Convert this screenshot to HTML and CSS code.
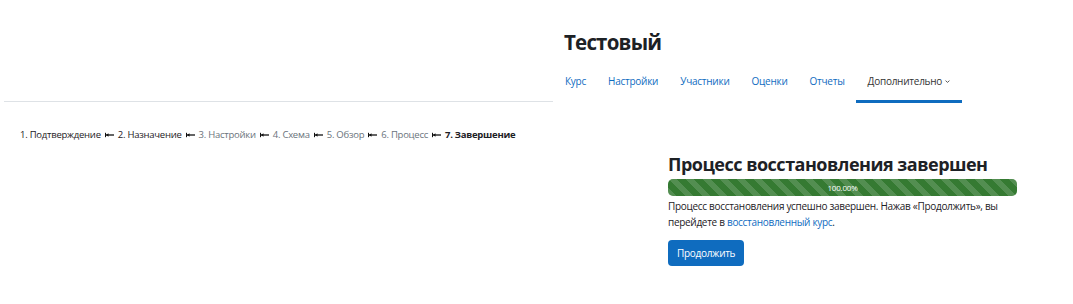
FILE: index.html
```html
<!DOCTYPE html>
<html lang="ru">
<head>
<meta charset="utf-8">
<title>Тестовый</title>
<link rel="stylesheet" href="styles.css">
</head>
<body>
<div class="top">
  <div class="left-head"></div>
  <div class="course-head">
    <h1 class="title">Тестовый</h1>
    <nav class="tabs">
      <a class="tab" href="#">Курс</a>
      <a class="tab" href="#">Настройки</a>
      <a class="tab" href="#">Участники</a>
      <a class="tab" href="#">Оценки</a>
      <a class="tab" href="#">Отчеты</a>
      <a class="tab active" href="#">Дополнительно<svg class="chev" viewBox="0 0 8 8" width="7" height="7"><path d="M1.8 3 L4 5 L6.2 3" fill="none" stroke="#444" stroke-width="1"/></svg></a>
    </nav>
  </div>
</div>

<div class="steps">
  <span class="step done">1. Подтверждение</span>
  <svg class="sep" viewBox="0 0 9 6" width="9" height="6"><path d="M0.5 0.8 V5.2" stroke="#111" stroke-width="1"/><path d="M1 3 H9" stroke="#111" stroke-width="1.3"/><path d="M1 3 L3.5 1.3 V4.7 Z" fill="#111"/></svg>
  <span class="step done">2. Назначение</span>
  <svg class="sep" viewBox="0 0 9 6" width="9" height="6"><path d="M0.5 0.8 V5.2" stroke="#111" stroke-width="1"/><path d="M1 3 H9" stroke="#111" stroke-width="1.3"/><path d="M1 3 L3.5 1.3 V4.7 Z" fill="#111"/></svg>
  <span class="step todo">3. Настройки</span>
  <svg class="sep" viewBox="0 0 9 6" width="9" height="6"><path d="M0.5 0.8 V5.2" stroke="#111" stroke-width="1"/><path d="M1 3 H9" stroke="#111" stroke-width="1.3"/><path d="M1 3 L3.5 1.3 V4.7 Z" fill="#111"/></svg>
  <span class="step todo">4. Схема</span>
  <svg class="sep" viewBox="0 0 9 6" width="9" height="6"><path d="M0.5 0.8 V5.2" stroke="#111" stroke-width="1"/><path d="M1 3 H9" stroke="#111" stroke-width="1.3"/><path d="M1 3 L3.5 1.3 V4.7 Z" fill="#111"/></svg>
  <span class="step todo">5. Обзор</span>
  <svg class="sep" viewBox="0 0 9 6" width="9" height="6"><path d="M0.5 0.8 V5.2" stroke="#111" stroke-width="1"/><path d="M1 3 H9" stroke="#111" stroke-width="1.3"/><path d="M1 3 L3.5 1.3 V4.7 Z" fill="#111"/></svg>
  <span class="step todo">6. Процесс</span>
  <svg class="sep" viewBox="0 0 9 6" width="9" height="6"><path d="M0.5 0.8 V5.2" stroke="#111" stroke-width="1"/><path d="M1 3 H9" stroke="#111" stroke-width="1.3"/><path d="M1 3 L3.5 1.3 V4.7 Z" fill="#111"/></svg>
  <span class="step current">7. Завершение</span>
</div>

<div class="result">
  <h2 class="result-title">Процесс восстановления завершен</h2>
  <div class="progress"><div class="bar" style="width:100%">100.00%</div></div>
  <p class="msg">Процесс восстановления успешно завершен. Нажав «Продолжить», вы перейдете в <a href="#">восстановленный курс</a>.</p>
  <button class="btn" type="button">Продолжить</button>
</div>
</body>
</html>
```

FILE: styles.css
```css
* { box-sizing: border-box; }
html, body { margin: 0; padding: 0; background: #fff; }
body {
  font-family: "Open Sans", "Noto Sans", "DejaVu Sans", sans-serif;
  color: #1d2125;
  width: 1073px;
  height: 304px;
  overflow: hidden;
}
a { color: #0f6cbf; text-decoration: none; }

.top { display: flex; align-items: flex-start; }
.left-head {
  width: 549px;
  margin-left: 4px;
  height: 102px;
  border-bottom: 1px solid #dee2e6;
}
.course-head { padding-left: 11px; }
.title {
  margin: 0;
  padding-top: 28px;
  font-size: 20.5px;
  font-weight: 700;
  line-height: 28px;
  letter-spacing: -0.8px;
}
.tabs {
  display: flex;
  margin-top: 18px;
  height: 29px;
}
.tab {
  display: flex;
  align-items: flex-start;
  font-size: 10px;
  letter-spacing: -0.25px;
  line-height: 14px;
  padding: 0 11px;
  height: 29px;
}
.tab:first-child { padding-left: 1px; }
.tab.active {
  color: #333;
  border-bottom: 3px solid #0f6cbf;
  padding: 0 11px 0 12px;
}
.chev { margin-left: 2px; margin-top: 4px; }

.steps {
  display: flex;
  align-items: center;
  gap: 4px;
  padding-left: 20px;
  margin-top: 25px;
  font-size: 9.5px;
  letter-spacing: -0.25px;
  line-height: 14px;
}
.step.done { color: #1d2125; }
.step.todo { color: #6a737b; }
.step.current { font-weight: 700; color: #1d2125; }
.sep { display: block; }

.result {
  margin-left: 668px;
  width: 349px;
  margin-top: 9px;
}
.result-title {
  margin: 0;
  font-size: 18px;
  font-weight: 700;
  line-height: 26px;
  letter-spacing: -0.5px;
}
.progress {
  margin-top: 2px;
  height: 17px;
  border-radius: 5px;
  background: #e9ecef;
  overflow: hidden;
}
.bar {
  height: 100%;
  background-color: #357a32;
  background-image: linear-gradient(45deg, rgba(255,255,255,.15) 25%, transparent 25%, transparent 50%, rgba(255,255,255,.15) 50%, rgba(255,255,255,.15) 75%, transparent 75%, transparent);
  background-size: 17px 17px;
  color: #fff;
  font-size: 8px;
  letter-spacing: -0.2px;
  line-height: 17px;
  text-align: center;
}
.msg {
  margin: 2px 0 0;
  font-size: 10px;
  letter-spacing: -0.3px;
  line-height: 16px;
}
.btn {
  margin-top: 10px;
  background: #0f6cbf;
  color: #fff;
  border: 0;
  border-radius: 4px;
  font-family: inherit;
  font-size: 10px;
  letter-spacing: -0.3px;
  height: 26px;
  padding: 0 9px;
}
```
